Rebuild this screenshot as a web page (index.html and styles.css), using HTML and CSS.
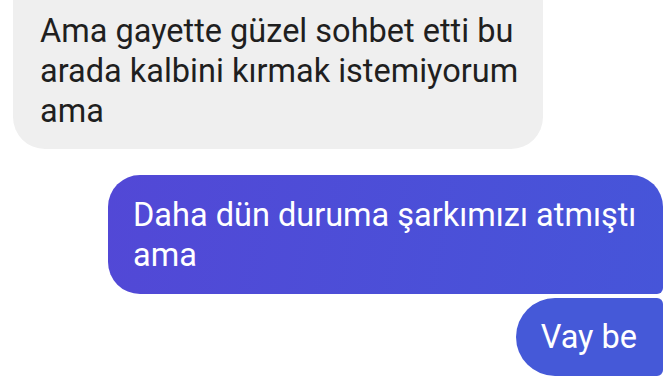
FILE: index.html
```html
<!DOCTYPE html>
<html lang="tr">
  <head>
    <meta charset="UTF-8" />
    <meta name="viewport" content="width=device-width, initial-scale=1.0" />
    <title>Sohbet</title>
    <link rel="stylesheet" href="styles.css">
  </head>
  <body>
    <div class="chat">
      <div class="msg msg-in">
        Ama gayette güzel sohbet etti bu arada kalbini kırmak istemiyorum ama
      </div>
      <div class="msg msg-out msg-first">
        Daha dün duruma şarkımızı atmıştı ama
      </div>
      <div class="msg msg-out msg-last">Vay be</div>
    </div>
  </body>
</html>
```

FILE: styles.css
```css
html,
body {
  margin: 0;
  height: 100%;
  overflow: hidden;
  background: #fff;
}
body {
  font-family: Roboto, 'Noto Sans', sans-serif;
  font-size: 32.5px;
  line-height: 40px;
}
.chat {
  display: flex;
  flex-direction: column;
  margin-top: -30px;
  padding: 0 9px 0 13px;
}
.msg {
  box-sizing: border-box;
}
.msg-in {
  align-self: flex-start;
  width: 530px;
  padding: 41px 14px 18px 27px;
  background: #efefef;
  color: #1f1f1f;
  border-radius: 32px;
}
.msg-out {
  align-self: flex-end;
  color: #fff;
}
.msg-first {
  width: 555px;
  margin-top: 26px;
  padding: 20px 14px 19px 25px;
  background: linear-gradient(100deg, #5248d6, #4655d9);
  border-radius: 32px 32px 6px 32px;
}
.msg-last {
  margin-top: 4px;
  padding: 19px 26px 19px 25px;
  background: #4559d8;
  border-radius: 39px 6px 6px 39px;
}
```
